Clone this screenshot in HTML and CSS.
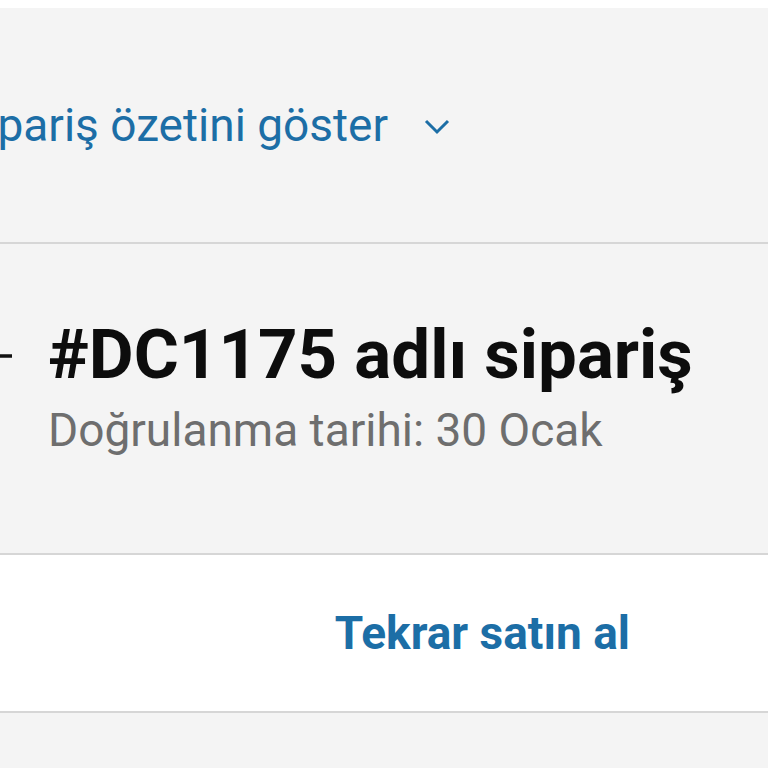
FILE: index.html
```html
<!DOCTYPE html>
<html lang="tr">
<head>
  <meta charset="UTF-8">
  <meta name="viewport" content="width=device-width, initial-scale=1.0">
  <title>Sipariş</title>
  <link rel="stylesheet" href="styles.css">
</head>
<body>
  <div class="top-gap"></div>
  <div class="summary-toggle">
    <span class="summary-text">Sipariş özetini göster</span>
    <svg class="chevron" width="26" height="16" viewBox="0 0 26 16">
      <path d="M2 2 L13 13 L24 2" fill="none" stroke="currentColor" stroke-width="3"/>
    </svg>
  </div>
  <div class="order-header">
    <svg class="back-arrow" width="40" height="30" viewBox="0 0 40 30">
      <path d="M2 15 H40 M14 3 L2 15 L14 27" fill="none" stroke="#111" stroke-width="3.5"/>
    </svg>
    <div class="order-info">
      <h1 class="order-title">#DC1175 adlı sipariş</h1>
      <p class="order-date">Doğrulanma tarihi: 30 Ocak</p>
    </div>
  </div>
  <div class="actions">
    <button class="buy-again">Tekrar satın al</button>
  </div>
  <div class="bottom-fill"></div>
</body>
</html>
```

FILE: styles.css
```css
body { margin: 0; background: #fff; font-family: Roboto, "Noto Sans", sans-serif; overflow: hidden; }
.top-gap { height: 8px; background: #fff; }
.summary-toggle {
  height: 234px;
  background: #f4f4f4;
  border-bottom: 2px solid #d6d6d6;
  display: flex; align-items: center; gap: 36px;
  color: #1c6ea6;
}
.summary-text { font-size: 46px; margin-left: -41px; white-space: nowrap; }
.chevron { margin-top: 4px; }
.order-header {
  height: 243px;
  padding-top: 66px;
  background: #f4f4f4;
  border-bottom: 2px solid #d6d6d6;
  display: flex; align-items: flex-start; gap: 36px;
}
.back-arrow { margin-left: -28px; margin-top: 31px; flex-shrink: 0; }
.order-title { margin: 0; font-size: 69px; font-weight: 700; color: #0d0d0d; line-height: 90px; white-space: nowrap; }
.order-date { margin: 3px 0 0; font-size: 46px; line-height: 54px; color: #6e6e6e; }
.actions {
  height: 156px;
  background: #fff;
  border-bottom: 2px solid #d6d6d6;
  display: flex; align-items: center; justify-content: flex-end;
  padding-right: 138px;
}
.buy-again {
  background: none; border: none; padding: 0;
  font-family: inherit; font-size: 46px; font-weight: 700; color: #1c6ea6;
}
.bottom-fill { height: 60px; background: #f4f4f4; }
```
